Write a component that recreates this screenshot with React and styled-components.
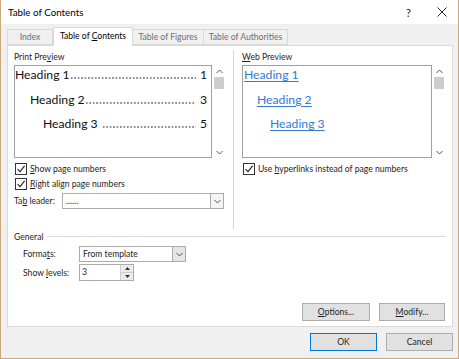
import React from "react";
import styled, { createGlobalStyle } from "styled-components";

const Global = createGlobalStyle`
  html, body { margin: 0; padding: 0; background: #fff; }
  * { box-sizing: border-box; }
`;

const UI_FONT = `Lato, "Noto Sans", sans-serif`;
const DOC_FONT = `Lato, "Noto Sans", sans-serif`;

const Window = styled.div`
  width: 459px;
  height: 359px;
  border: 1px solid #c9a97c;
  border-top: none;
  background: #f0f0f0;
  display: flex;
  flex-direction: column;
  font-family: ${UI_FONT};
  font-size: 8.6px;
  color: #000;
`;

const TitleBar = styled.div`
  height: 24px;
  background: #fff;
  display: flex;
  align-items: center;
  padding-left: 7px;
`;

const Title = styled.div`
  flex: 1;
  font-size: 9.8px;
`;

const TitleButton = styled.div`
  width: 33px;
  height: 24px;
  display: flex;
  align-items: center;
  justify-content: center;
  font-size: 11px;
  color: #222;
`;

const Body = styled.div`
  flex: 1;
  display: flex;
  flex-direction: column;
  padding: 3px 5px 0 6px;
`;

const TabStrip = styled.div`
  display: flex;
  align-items: flex-end;
  height: 18px;
  position: relative;
  z-index: 1;
`;

const Tab = styled.div`
  width: ${(p) => p.$w}px;
  height: ${(p) => (p.$active ? 19 : 16)}px;
  margin-bottom: ${(p) => (p.$active ? -1 : 0)}px;
  background: ${(p) => (p.$active ? "#fff" : "#f0f0f0")};
  border: 1px solid #d9d9d9;
  border-bottom: ${(p) => (p.$active ? "none" : "1px solid #d9d9d9")};
  border-left: ${(p) => (p.$first || p.$active ? "1px solid #d9d9d9" : "none")};
  color: ${(p) => (p.$active ? "#000" : "#6f6f6f")};
  display: flex;
  align-items: center;
  justify-content: center;
  padding-bottom: ${(p) => (p.$active ? 2 : 0)}px;
`;

const Panel = styled.div`
  height: 282px;
  background: #fff;
  border: 1px solid #d9d9d9;
  padding: 5px 6px 0 6px;
  display: flex;
  flex-direction: column;
`;

const TopGrid = styled.div`
  display: grid;
  grid-template-columns: 212px 1px 1fr;
  column-gap: 7px;
  height: 178px;
`;

const Divider = styled.div`
  background: #d5d5d5;
  margin-top: -1px;
`;

const Column = styled.div`
  display: flex;
  flex-direction: column;
  padding-left: ${(p) => p.$pl || 0}px;
`;

const Label = styled.div`
  height: 13px;
  line-height: 13px;
  margin-bottom: 1px;
  color: #1e1e1e;
`;

const PreviewWrap = styled.div`
  display: flex;
  height: 93px;
`;

const PreviewBox = styled.div`
  flex: 1;
  border: 1px solid #a0a0a0;
  display: flex;
  flex-direction: column;
  overflow: hidden;
`;

const Scrollbar = styled.div`
  width: 14px;
  display: flex;
  flex-direction: column;
  background: #fff;
`;

const ScrollArrow = styled.div`
  height: 12px;
  display: flex;
  align-items: center;
  justify-content: center;
`;

const Thumb = styled.div`
  height: 12px;
  margin: 0 2px;
  background: #cdcdcd;
`;

const Track = styled.div`
  flex: 1;
`;

const TocLine = styled.div`
  display: flex;
  align-items: baseline;
  font-family: ${DOC_FONT};
  font-size: 12.2px;
  line-height: 18px;
  height: 24.5px;
  padding-left: ${(p) => p.$indent}px;
  padding-right: 4px;
  white-space: nowrap;
  color: #111;
`;

const Leader = styled.span`
  flex: 1;
  height: 2px;
  margin-left: ${(p) => (p.$gap ? 4 : 0.5)}px;
  margin-right: 4px;
  background-image: radial-gradient(circle at 50% 50%, #444 0.5px, transparent 0.9px);
  background-size: 3.45px 2px;
  background-repeat: repeat-x;
  background-position: left bottom;
`;

const LinkLine = styled.div`
  font-family: ${DOC_FONT};
  font-size: 12.2px;
  height: 24.5px;
  line-height: 18px;
  padding-left: ${(p) => p.$indent}px;
`;

const Link = styled.span`
  color: #2f7bd6;
  text-decoration: underline;
  text-underline-offset: 2px;
  text-decoration-thickness: 1px;
`;

const CheckRow = styled.div`
  display: flex;
  align-items: center;
  height: 15px;
  margin-top: ${(p) => p.$mt || 0}px;
  padding-left: 1px;
  gap: 3px;
  color: #1e1e1e;
`;

const Box = styled.div`
  width: 12px;
  height: 12px;
  border: 1px solid #333;
  background: #fff;
  display: flex;
  align-items: center;
  justify-content: center;
`;

const FieldRow = styled.div`
  display: flex;
  align-items: center;
  margin-top: ${(p) => p.$mt || 0}px;
  padding-left: ${(p) => p.$pl || 0}px;
  color: #1e1e1e;
`;

const FieldLabel = styled.div`
  width: ${(p) => p.$w}px;
`;

const Select = styled.div`
  width: ${(p) => p.$w}px;
  height: 16px;
  border: 1px solid #acacac;
  background: #fff;
  display: flex;
  align-items: center;
`;

const SelectText = styled.div`
  flex: 1;
  padding-left: 3px;
`;

const SelectArrow = styled.div`
  width: 13px;
  height: 100%;
  border-left: 1px solid #acacac;
  background: ${(p) => (p.$gray ? "#e5e5e5" : "#f4f4f4")};
  display: flex;
  align-items: center;
  justify-content: center;
`;

const Spin = styled.div`
  display: flex;
  width: 55px;
  height: 17px;
  border: 1px solid #acacac;
  background: #fff;
`;

const SpinText = styled.div`
  flex: 1;
  padding-left: 2px;
  line-height: 15px;
`;

const SpinButtons = styled.div`
  width: 13px;
  display: flex;
  flex-direction: column;
  border-left: 1px solid #cfcfcf;
`;

const SpinButton = styled.div`
  flex: 1;
  display: flex;
  align-items: center;
  justify-content: center;
  background: #ececec;
  border-bottom: ${(p) => (p.$top ? "1px solid #cfcfcf" : "none")};
`;

const SectionHeader = styled.div`
  display: flex;
  align-items: center;
  height: 15px;
  color: #1e1e1e;
`;

const Rule = styled.div`
  flex: 1;
  height: 1px;
  background: #dcdcdc;
  margin-left: 4px;
`;

const ButtonRow = styled.div`
  display: flex;
  justify-content: flex-end;
  gap: ${(p) => p.$gap}px;
  margin-top: ${(p) => p.$mt}px;
  padding-right: ${(p) => p.$pr || 0}px;
`;

const Button = styled.div`
  width: ${(p) => p.$w}px;
  height: 18px;
  background: #e1e1e1;
  border: 1px solid ${(p) => (p.$primary ? "#0078d7" : "#adadad")};
  display: flex;
  align-items: center;
  justify-content: center;
  color: #1e1e1e;
`;

const Check = () => (
  <Box>
    <svg width="10" height="10" viewBox="0 0 10 10">
      <path d="M1.5 5.2 L4 7.6 L8.6 1.8" fill="none" stroke="#222" strokeWidth="1.1" />
    </svg>
  </Box>
);

const Chevron = ({ up }) => (
  <svg width="7" height="5" viewBox="0 0 7 5">
    <path
      d={up ? "M0.5 4 L3.5 1 L6.5 4" : "M0.5 1 L3.5 4 L6.5 1"}
      fill="none"
      stroke="#555"
      strokeWidth="1"
    />
  </svg>
);

const Tri = ({ up }) => (
  <svg width="5" height="3" viewBox="0 0 5 3">
    <path d={up ? "M0 3 L2.5 0 L5 3Z" : "M0 0 L2.5 3 L5 0Z"} fill="#333" />
  </svg>
);

const ScrollBar = () => (
  <Scrollbar>
    <ScrollArrow>
      <Chevron up />
    </ScrollArrow>
    <Thumb />
    <Track />
    <ScrollArrow>
      <Chevron />
    </ScrollArrow>
  </Scrollbar>
);

const tocItems = [
  { t: "Heading 1", n: "1", indent: 0, gap: false },
  { t: "Heading 2", n: "3", indent: 15, gap: false },
  { t: "Heading 3", n: "5", indent: 28, gap: true },
];

export default function App() {
  return (
    <>
      <Global />
      <Window>
        <TitleBar>
          <Title>Table of Contents</Title>
          <TitleButton>?</TitleButton>
          <TitleButton>
            <svg width="10" height="10" viewBox="0 0 10 10">
              <path d="M0.5 0.5 L9.5 9.5 M9.5 0.5 L0.5 9.5" stroke="#222" strokeWidth="1" />
            </svg>
          </TitleButton>
        </TitleBar>
        <Body>
          <TabStrip>
            <Tab $w={46} $first>Index</Tab>
            <Tab $w={80} $active>
              <span>
                Table of <u>C</u>ontents
              </span>
            </Tab>
            <Tab $w={71}>Table of Figures</Tab>
            <Tab $w={84}>Table of Authorities</Tab>
          </TabStrip>
          <Panel>
            <TopGrid>
              <Column>
                <Label>
                  Print Pre<u>v</u>iew
                </Label>
                <PreviewWrap>
                  <PreviewBox>
                    {tocItems.map((it) => (
                      <TocLine key={it.t} $indent={it.indent}>
                        <span>{it.t}</span>
                        <Leader $gap={it.gap} />
                        <span>{it.n}</span>
                      </TocLine>
                    ))}
                  </PreviewBox>
                  <ScrollBar />
                </PreviewWrap>
                <CheckRow $mt={3}>
                  <Check />
                  <span>
                    <u>S</u>how page numbers
                  </span>
                </CheckRow>
                <CheckRow>
                  <Check />
                  <span>
                    <u>R</u>ight align page numbers
                  </span>
                </CheckRow>
                <FieldRow $mt={2}>
                  <FieldLabel $w={48}>
                    Ta<u>b</u> leader:
                  </FieldLabel>
                  <Select $w={162}>
                    <SelectText>......</SelectText>
                    <SelectArrow>
                      <Chevron />
                    </SelectArrow>
                  </Select>
                </FieldRow>
              </Column>
              <Divider />
              <Column $pl={1}>
                <Label>
                  <u>W</u>eb Preview
                </Label>
                <PreviewWrap>
                  <PreviewBox>
                    <LinkLine $indent={1}>
                      <Link>Heading 1</Link>
                    </LinkLine>
                    <LinkLine $indent={14}>
                      <Link>Heading 2</Link>
                    </LinkLine>
                    <LinkLine $indent={27}>
                      <Link>Heading 3</Link>
                    </LinkLine>
                  </PreviewBox>
                  <ScrollBar />
                </PreviewWrap>
                <CheckRow $mt={3}>
                  <Check />
                  <span>
                    Use <u>h</u>yperlinks instead of page numbers
                  </span>
                </CheckRow>
              </Column>
            </TopGrid>
            <SectionHeader>
              <span>General</span>
              <Rule />
            </SectionHeader>
            <FieldRow $mt={2} $pl={9}>
              <FieldLabel $w={56}>
                Forma<u>t</u>s:
              </FieldLabel>
              <Select $w={107}>
                <SelectText>From template</SelectText>
                <SelectArrow $gray>
                  <Chevron />
                </SelectArrow>
              </Select>
            </FieldRow>
            <FieldRow $mt={2} $pl={9}>
              <FieldLabel $w={56}>
                Show <u>l</u>evels:
              </FieldLabel>
              <Spin>
                <SpinText>3</SpinText>
                <SpinButtons>
                  <SpinButton $top>
                    <Tri up />
                  </SpinButton>
                  <SpinButton>
                    <Tri />
                  </SpinButton>
                </SpinButtons>
              </Spin>
            </FieldRow>
            <ButtonRow $gap={9} $mt={22} $pr={1}>
              <Button $w={68}>
                <span>
                  <u>O</u>ptions...
                </span>
              </Button>
              <Button $w={66}>
                <span>
                  <u>M</u>odify...
                </span>
              </Button>
            </ButtonRow>
          </Panel>
          <ButtonRow $gap={9} $mt={6}>
            <Button $w={67} $primary>
              OK
            </Button>
            <Button $w={67}>Cancel</Button>
          </ButtonRow>
        </Body>
      </Window>
    </>
  );
}
